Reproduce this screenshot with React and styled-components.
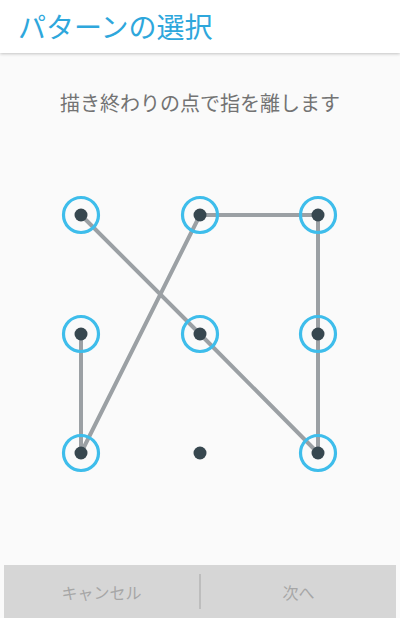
import React from 'react'
import styled, { createGlobalStyle } from 'styled-components'

const GlobalStyle = createGlobalStyle`
  html, body {
    margin: 0;
    padding: 0;
    background: #fafafa;
    font-family: "Noto Sans CJK JP", "Noto Sans", sans-serif;
  }
`

const Screen = styled.div`
  display: flex;
  flex-direction: column;
  width: 400px;
  height: 618px;
  background: #fafafa;
  overflow: hidden;
`

const Header = styled.header`
  height: 53px;
  flex-shrink: 0;
  display: flex;
  align-items: center;
  padding-left: 18px;
  background: #ffffff;
  box-shadow: 0 1px 3px rgba(0, 0, 0, 0.22);
  position: relative;
  z-index: 1;
`

const Title = styled.h1`
  margin: 0 0 2px;
  font-size: 28px;
  font-weight: 400;
  color: #2ea7dc;
  line-height: 1;
`

const Hint = styled.p`
  margin: 36px 0 0;
  text-align: center;
  font-size: 20px;
  line-height: 28px;
  color: #737373;
`

const PadWrap = styled.div`
  flex: 1;
  display: flex;
  justify-content: center;
  padding-top: 78px;
`

const Footer = styled.div`
  height: 53px;
  margin: 0 4px;
  display: grid;
  grid-template-columns: 1fr 2px 1fr;
  align-items: center;
  background: #d6d6d6;
`

const FooterButton = styled.button`
  height: 100%;
  border: 0;
  background: transparent;
  font-family: inherit;
  font-size: 16px;
  color: #a6a6a6;
  padding: 0;
`

const Divider = styled.span`
  height: 35px;
  width: 2px;
  background: #bdbdbd;
`

// node centres in pad coordinates
const COLS = [81, 200, 318]
const ROWS = [20, 139, 258]
const node = i => [COLS[i % 3], ROWS[Math.floor(i / 3)]]

const path = [3, 6, 1, 2, 5, 8, 4, 0]

const PatternPad = () => {
  const points = path.map(node)
  return (
    <svg width="400" height="290" viewBox="0 0 400 290">
      <polyline
        points={points.map(p => p.join(',')).join(' ')}
        fill="none"
        stroke="#9ba0a4"
        strokeWidth="4"
        strokeLinejoin="round"
      />
      {[0, 1, 2, 3, 4, 5, 6, 7, 8].map(i => {
        const [cx, cy] = node(i)
        return (
          <g key={i}>
            {path.includes(i) && (
              <circle cx={cx} cy={cy} r="17.5" fill="none" stroke="#3ebdeb" strokeWidth="3.2" />
            )}
            <circle cx={cx} cy={cy} r="6.5" fill="#37474f" />
          </g>
        )
      })}
    </svg>
  )
}

const App = () => (
  <>
    <GlobalStyle />
    <Screen>
      <Header>
        <Title>パターンの選択</Title>
      </Header>
      <Hint>描き終わりの点で指を離します</Hint>
      <PadWrap>
        <PatternPad />
      </PadWrap>
      <Footer>
        <FooterButton>キャンセル</FooterButton>
        <Divider />
        <FooterButton>次へ</FooterButton>
      </Footer>
    </Screen>
  </>
)

export default App
